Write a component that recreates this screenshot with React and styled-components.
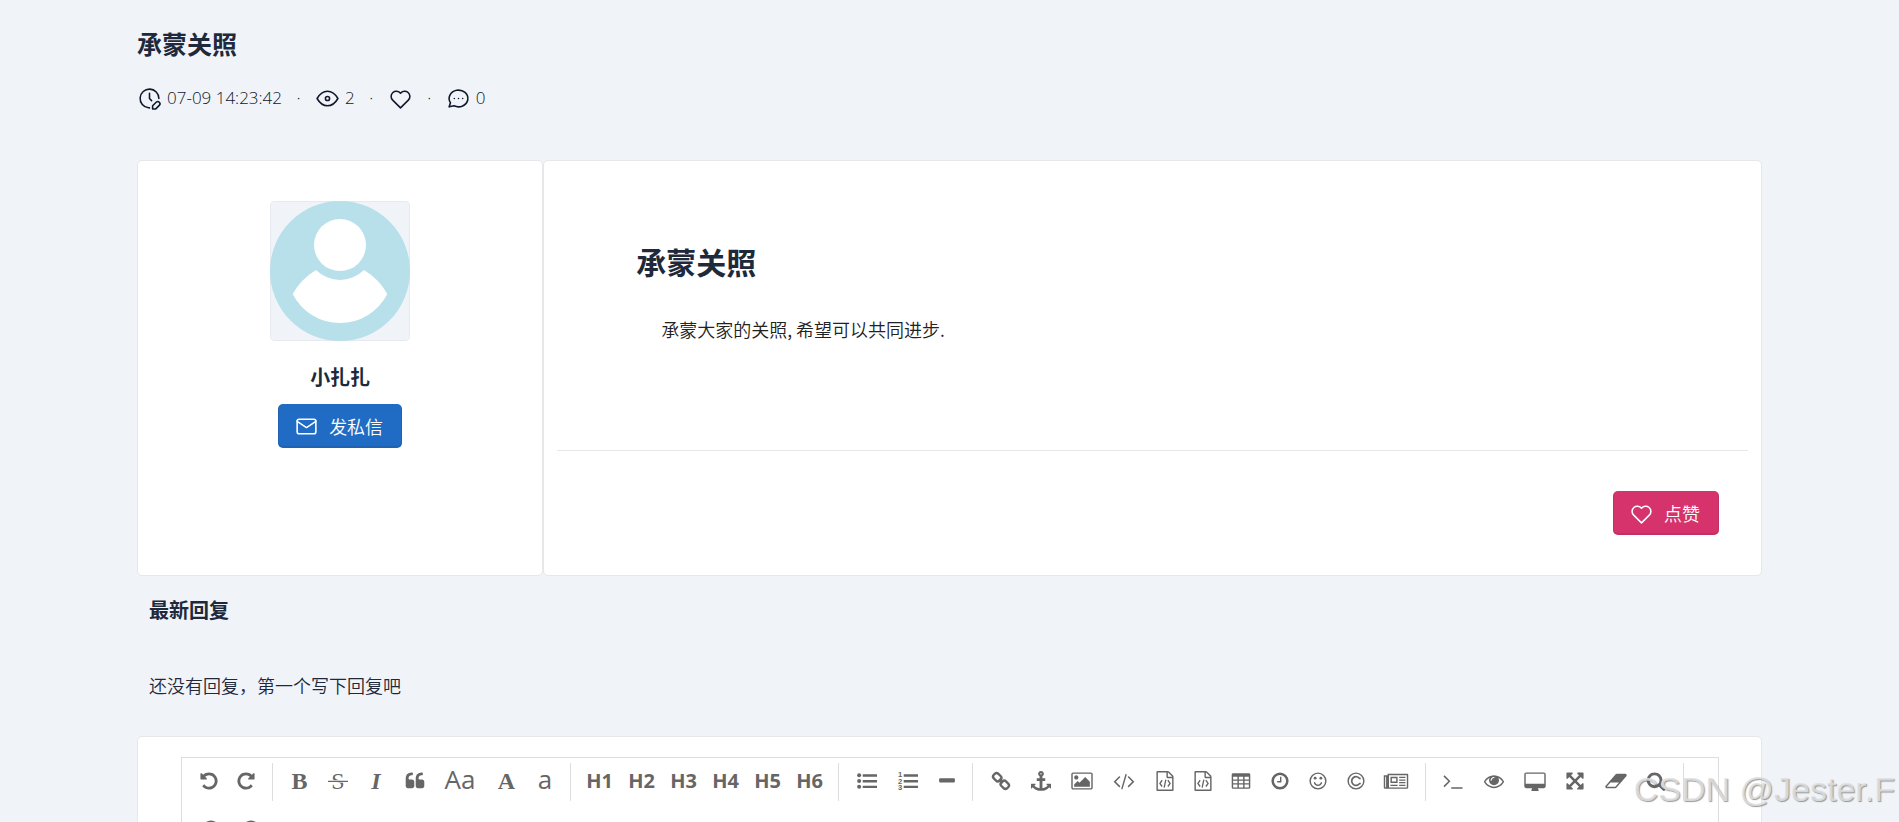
import React from "react";
// styles
import styled, { createGlobalStyle } from "styled-components";

const App = () => {
    return (
        <Page>
            <GlobalStyle />
            <Container>
                <PageHeader />
                <Columns>
                    <AuthorCard />
                    <ArticleCard />
                </Columns>
                <Replies />
                <Editor />
            </Container>
            <Watermark>CSDN @Jester.F</Watermark>
        </Page>
    );
};

const PageHeader = () => (
    <Header>
        <PageTitle>承蒙关照</PageTitle>
        <Meta>
            <MetaItem><LineIcon name="clock" />07-09 14:23:42</MetaItem>
            <Dot>·</Dot>
            <MetaItem><LineIcon name="eye" />2</MetaItem>
            <Dot>·</Dot>
            <MetaItem><LineIcon name="heart" /></MetaItem>
            <Dot>·</Dot>
            <MetaItem><LineIcon name="message" />0</MetaItem>
        </Meta>
    </Header>
);

const AuthorCard = () => (
    <Author>
        <Avatar>
            <svg viewBox="0 0 140 140">
                <circle cx="70" cy="70" r="70" fill="#b8e0ea" />
                <circle cx="70" cy="44" r="26" fill="#fff" />
                <path
                    fill="#fff"
                    d="M46 69A34 34 0 0 0 94 69Q109 78 117.3 93A53 53 0 0 1 22.7 93Q31 78 46 69Z"
                />
            </svg>
        </Avatar>
        <AuthorName>小扎扎</AuthorName>
        <Button type="button" $color="#206bc4">
            <LineIcon name="mail" />发私信
        </Button>
    </Author>
);

const ArticleCard = () => (
    <Article>
        <ArticleBody>
            <h1>承蒙关照</h1>
            <p>承蒙大家的关照, 希望可以共同进步.</p>
        </ArticleBody>
        <ArticleFooter>
            <Button type="button" $color="#d6336c">
                <LineIcon name="heart" />点赞
            </Button>
        </ArticleFooter>
    </Article>
);

const Replies = () => (
    <ReplySection>
        <h3>最新回复</h3>
        <p>还没有回复，第一个写下回复吧</p>
    </ReplySection>
);

const Editor = () => (
    <EditorCard>
        <EditorBox>
            <Toolbar>
                {tools.map((group, i) => (
                    <React.Fragment key={i}>
                        {group.map((tool, j) => (
                            <Tool key={j} type="button" aria-label={tool.label} $width={tool.width}>
                                {tool.text
                                    ? <Glyph $kind={tool.kind}>{tool.text}</Glyph>
                                    : <SolidIcon name={tool.icon} />}
                            </Tool>
                        ))}
                        {i < tools.length - 1 && <Divider />}
                    </React.Fragment>
                ))}
            </Toolbar>
        </EditorBox>
    </EditorCard>
);

// toolbar, one array for each group between the dividers
const tools = [
    [
        { label: "undo", icon: "undo", width: 37 },
        { label: "redo", icon: "redo", width: 36 },
    ],
    [
        { label: "bold", text: "B", kind: "serif", width: 37 },
        { label: "strikethrough", icon: "strike", width: 38 },
        { label: "italic", text: "I", kind: "italic", width: 36 },
        { label: "quote", icon: "quote", width: 39 },
        { label: "capitalize words", text: "Aa", kind: "sans", width: 50 },
        { label: "uppercase", text: "A", kind: "serif", width: 41 },
        { label: "lowercase", text: "a", kind: "sans", width: 34 },
    ],
    [1, 2, 3, 4, 5, 6].map((n) => ({ label: "heading " + n, text: "H" + n, kind: "heading", width: 41 })),
    [
        { label: "unordered list", icon: "ul", width: 40 },
        { label: "ordered list", icon: "ol", width: 40 },
        { label: "horizontal rule", icon: "minus", width: 35 },
    ],
    [
        { label: "link", icon: "link", width: 39 },
        { label: "anchor", icon: "anchor", width: 40 },
        { label: "image", icon: "image", width: 40 },
        { label: "code", icon: "code", width: 42 },
        { label: "code block", icon: "file", width: 37 },
        { label: "preformatted text", icon: "file", width: 37 },
        { label: "table", icon: "table", width: 38 },
        { label: "datetime", icon: "clock", width: 37 },
        { label: "emoji", icon: "smile", width: 37 },
        { label: "html entities", icon: "copyright", width: 37 },
        { label: "page break", icon: "news", width: 42 },
    ],
    [
        { label: "goto line", icon: "terminal", width: 38 },
        { label: "unwatch", icon: "eye", width: 41 },
        { label: "preview", icon: "desktop", width: 40 },
        { label: "fullscreen", icon: "expand", width: 38 },
        { label: "clear", icon: "eraser", width: 41 },
        { label: "search", icon: "search", width: 38 },
    ],
    [
        { label: "help", icon: "help", width: 41 },
        { label: "about", icon: "info", width: 37 },
    ],
];

// outline icons, 24 grid
const lineIcons = {
    clock: (
        <>
            <path d="M21 12a9 9 0 1 0-9.972 8.948c.32.034.644.052.972.052" />
            <path d="M12 7v5l2 2" />
            <path d="M18.42 15.61a2.1 2.1 0 0 1 2.97 2.97L18 22h-3v-3l3.42-3.39z" />
        </>
    ),
    eye: (
        <>
            <circle cx="12" cy="12" r="2" />
            <path d="M22 12c-2.667 4.667-6 7-10 7s-7.333-2.333-10-7c2.667-4.667 6-7 10-7s7.333 2.333 10 7" />
        </>
    ),
    heart: <path d="M19.5 13.572L12 21l-7.5-7.428m0 0A5 5 0 1 1 12 7.006a5 5 0 1 1 7.5 6.572" />,
    message: (
        <>
            <path d="M3 20l1.3-3.9a9 8 0 1 1 3.4 2.9L3 20" />
            <path d="M12 12v.01M8 12v.01M16 12v.01" />
        </>
    ),
    mail: (
        <>
            <rect x="3" y="5" width="18" height="14" rx="2" />
            <path d="M3 7l9 6l9-6" />
        </>
    ),
};

const LineIcon = ({ name }) => (
    <Outline viewBox="0 0 24 24" aria-hidden="true">{lineIcons[name]}</Outline>
);

const undoPath = "M1664 896q0 156-61 298t-164 245-245 164-298 61q-172 0-327-72.5t-264-204.5q-7-10-6.5-22.5t8.5-20.5l137-138q10-9 25-9 16 2 23 12 73 95 179 147t225 52q104 0 198.5-40.5t163.5-109.5 109.5-163.5 40.5-198.5-40.5-198.5-109.5-163.5-163.5-109.5-198.5-40.5q-98 0-188 35.5t-160 101.5l137 138q31 30 14 69-17 40-59 40h-448q-26 0-45-19t-19-45v-448q0-42 40-59 39-17 69 14l130 129q107-101 244.5-156.5t284.5-55.5q156 0 298 61t245 164 164 245 61 298z";
const quotePath = "v384q0 80-56 136t-136 56h-384q-80 0-136-56t-56-136v-704q0-104 40.5-198.5t109.5-163.5 163.5-109.5 198.5-40.5h64q26 0 45 19t19 45v128q0 26-19 45t-45 19h-64q-106 0-181 75t-75 181v32q0 40 28 68t68 28h224q80 0 136 56t56 136z";

// solid icons, 1792 grid
const solidIcons = {
    undo: <path d={undoPath} />,
    redo: <path transform="translate(1792 0) scale(-1 1)" d={undoPath} />,
    strike: (
        <>
            <text x="896" y="1640" fontSize="2150" fontFamily="Liberation Serif, serif" textAnchor="middle">S</text>
            <path stroke="#fff" strokeWidth="220" d="M0 930h1792" />
            <path stroke="currentColor" strokeWidth="110" d="M0 930h1792" />
        </>
    ),
    quote: <path d={"M832 960" + quotePath + "M1728 960" + quotePath} />,
    ul: (
        <>
            <circle cx="192" cy="384" r="180" />
            <circle cx="192" cy="896" r="180" />
            <circle cx="192" cy="1408" r="180" />
            <path d="M512 288h1280v220H512zM512 800h1280v220H512zM512 1312h1280v220H512z" />
        </>
    ),
    ol: (
        <>
            <g fontSize="680" fontWeight="700" fontFamily="Liberation Sans, sans-serif">
                <text x="0" y="520">1</text>
                <text x="0" y="1120">2</text>
                <text x="0" y="1740">3</text>
            </g>
            <path d="M512 288h1280v220H512zM512 800h1280v220H512zM512 1312h1280v220H512z" />
        </>
    ),
    minus: <rect x="192" y="660" width="1408" height="360" rx="90" />,
    link: (
        <g transform="translate(896 896) rotate(45)" fill="none" stroke="currentColor" strokeWidth="210">
            <rect x="-850" y="-290" width="740" height="580" rx="230" />
            <rect x="110" y="-290" width="740" height="580" rx="230" />
            <path d="M-240 0h480" />
        </g>
    ),
    anchor: <path d="M960 256q0-26-19-45t-45-19-45 19-19 45 19 45 45 19 45-19 19-45zm832 928v352q0 22-20 30-8 2-12 2-12 0-23-9l-93-93q-119 143-318.5 226.5t-429.5 83.5-429.5-83.5-318.5-226.5l-93 93q-9 9-23 9-4 0-12-2-20-8-20-30v-352q0-14 9-23t23-9h352q22 0 30 20 8 19-7 35l-100 100q67 91 189.5 153.5t271.5 82.5v-647h-192q-26 0-45-19t-19-45v-128q0-26 19-45t45-19h192v-163q-58-34-93-92.5t-35-128.5q0-106 75-181t181-75 181 75 75 181q0 70-35 128.5t-93 92.5v163h192q26 0 45 19t19 45v128q0 26-19 45t-45 19h-192v647q149-20 271.5-82.5t189.5-153.5l-100-100q-15-16-7-35 8-20 30-20h352q14 0 23 9t9 23z" />,
    image: <path d="M576 576q0 80-56 136t-136 56-136-56-56-136 56-136 136-56 136 56 56 136zm1024 384v448h-1408v-192l320-320 160 160 512-512zm96-704h-1600q-13 0-22.5 9.5t-9.5 22.5v1216q0 13 9.5 22.5t22.5 9.5h1600q13 0 22.5-9.5t9.5-22.5v-1216q0-13-9.5-22.5t-22.5-9.5zm160 32v1216q0 66-47 113t-113 47h-1600q-66 0-113-47t-47-113v-1216q0-66 47-113t113-47h1600q66 0 113 47t47 113z" />,
    code: <path d="M553 1399l-50 50q-10 10-23 10t-23-10l-466-466q-10-10-10-23t10-23l466-466q10-10 23-10t23 10l50 50q10 10 10 23t-10 23l-393 393 393 393q10 10 10 23t-10 23zm591-1067l-373 1291q-4 13-15.5 19.5t-23.5 2.5l-62-17q-13-4-19.5-15.5t-2.5-24.5l373-1291q4-13 15.5-19.5t23.5-2.5l62 17q13 4 19.5 15.5t2.5 24.5zm657 651l-466 466q-10 10-23 10t-23-10l-50-50q-10-10-10-23t10-23l393-393-393-393q-10-10-10-23t10-23l50-50q10-10 23-10t23 10l466 466q10 10 10 23t-10 23z" />,
    file: (
        <>
            <path d="M1596 380q28 28 48 76t20 88v1152q0 40-28 68t-68 28h-1344q-40 0-68-28t-28-68v-1600q0-40 28-68t68-28h896q40 0 88 20t76 48zm-444-244v376h376q-10-29-22-41l-313-313q-12-12-41-22zm384 1528v-1024h-416q-40 0-68-28t-28-68v-416h-768v1536h1280z" />
            <path fill="none" stroke="currentColor" strokeWidth="120" d="M640 830l-200 280 200 280M1152 830l200 280-200 280M970 780l-150 700" />
        </>
    ),
    table: <path fillRule="evenodd" d="M192 192h1408q128 0 128 128v1152q0 128-128 128H192q-128 0-128-128V320q0-128 128-128zM192 512v244h384V512zM704 512v244h384V512zM1216 512v244h384V512zM192 870v230h384V870zM704 870v230h384V870zM1216 870v230h384V870zM192 1220v252h384v-252zM704 1220v252h384v-252zM1216 1220v252h384v-252z" />,
    clock: (
        <>
            <circle cx="896" cy="896" r="656" fill="none" stroke="currentColor" strokeWidth="224" />
            <path d="M1024 544v448q0 14-9 23t-23 9h-320q-14 0-23-9t-9-23v-64q0-14 9-23t23-9h224v-352q0-14 9-23t23-9h64q14 0 23 9t9 23z" />
        </>
    ),
    smile: (
        <>
            <circle cx="896" cy="896" r="704" fill="none" stroke="currentColor" strokeWidth="128" />
            <circle cx="640" cy="640" r="128" />
            <circle cx="1152" cy="640" r="128" />
            <path d="M1262 1075q-37 121-138 195t-228 74-228-74-138-195q-8-25 4-48.5t38-31.5q25-8 48.5 4t31.5 38q25 80 92.5 129.5t151.5 49.5 151.5-49.5 92.5-129.5q8-26 32-38t49-4 37 31.5 4 48.5z" />
        </>
    ),
    copyright: (
        <g fill="none" stroke="currentColor">
            <circle cx="896" cy="896" r="704" strokeWidth="128" />
            <path strokeWidth="150" d="M1250 740V600M1230 690A390 390 0 1 0 1230 1110M1250 1180V1050" />
        </g>
    ),
    news: (
        <>
            <path fillRule="evenodd" d="M140 256H1930q62 0 62 62V1474q0 126-126 126H-70q-130 0-130-130V384H140zM270 384V1474H1866V384zM0 512H-72V1440q0 40 40 40t40-40V512z" />
            <path fillRule="evenodd" d="M400 512h640v560H400zM528 640v304h384V640zM1180 512h560v120h-560zM1180 760h560v120h-560zM1180 980h560v120h-560zM400 1230h640v120H400zM1180 1230h560v120h-560z" />
        </>
    ),
    terminal: (
        <path fill="none" stroke="currentColor" strokeWidth="140" d="M90 440l480 480L90 1400M740 1530h1010" />
    ),
    eye: <path d="M1664 960q-152-236-381-353 61 104 61 225 0 185-131.5 316.5t-316.5 131.5-316.5-131.5-131.5-316.5q0-121 61-225-229 117-381 353 133 205 333.5 326.5t434.5 121.5 434.5-121.5 333.5-326.5zm-720-384q0-20-14-34t-34-14q-125 0-214.5 89.5t-89.5 214.5q0 20 14 34t34 14 34-14 14-34q0-86 61-147t147-61q20 0 34-14t14-34zm848 384q0 34-20 69-140 230-376.5 368.5t-499.5 138.5-499.5-139-376.5-368q-20-35-20-69t20-69q140-229 376.5-368t499.5-139 499.5 139 376.5 368q20 35 20 69z" />,
    desktop: <path fillRule="evenodd" d="M96 128h1600q160 0 160 160v1088q0 160-160 160h-544q0 60 64 128v128H576v-128q64-68 64-128H96q-160 0-160-160V288q0-160 160-160zM64 256v896h1664V256z" />,
    expand: <path d="M1411 541l-355 355 355 355 144-144q29-31 70-14 39 17 39 59v448q0 26-19 45t-45 19h-448q-42 0-59-40-17-39 14-69l144-144-355-355-355 355 144 144q31 30 14 69-17 40-59 40h-448q-26 0-45-19t-19-45v-448q0-42 40-59 39-17 69 14l144 144 355-355-355-355-144 144q-19 19-45 19-12 0-24-5-40-17-40-59v-448q0-26 19-45t45-19h448q42 0 59 40 17 39-14 69l-144 144 355 355 355-355-144-144q-31-30-14-69 17-40 59-40h448q26 0 45 19t19 45v448q0 42-39 59-13 5-25 5-26 0-45-19z" />,
    eraser: <path d="M832 1408l336-384h-768l-336 384h768zm1013-1077q15 34 9.5 71.5t-30.5 65.5l-896 1024q-38 44-96 44h-768q-38 0-69.5-20.5t-47.5-54.5q-15-34-9.5-71.5t30.5-65.5l896-1024q38-44 96-44h768q38 0 69.5 20.5t47.5 54.5z" />,
    search: <path d="M1216 832q0-185-131.5-316.5t-316.5-131.5-316.5 131.5-131.5 316.5 131.5 316.5 316.5 131.5 316.5-131.5 131.5-316.5zm512 832q0 52-38 90t-90 38q-54 0-90-38l-343-342q-179 124-399 124-143 0-273.5-55.5t-225-150-150-225-55.5-273.5 55.5-273.5 150-225 225-150 273.5-55.5 273.5 55.5 225 150 150 225 55.5 273.5q0 220-124 399l343 343q37 37 37 90z" />,
    help: (
        <>
            <circle cx="896" cy="896" r="768" />
            <path fill="none" stroke="#fff" strokeWidth="190" d="M600 680q60-200 296-200t250 200q0 120-130 200t-120 200M896 1200v190" />
        </>
    ),
    info: (
        <>
            <circle cx="896" cy="896" r="768" />
            <path fill="none" stroke="#fff" strokeWidth="200" d="M896 380v200M740 800h156v500M700 1320h400" />
        </>
    ),
};

const SolidIcon = ({ name }) => (
    <Solid viewBox="0 0 1792 1792" aria-hidden="true">{solidIcons[name]}</Solid>
);

// styled components
const GlobalStyle = createGlobalStyle`
    * {
        box-sizing: border-box;
        margin: 0;
    }

    body {
        background: #f0f4f9;
        color: #1e293b;
        font-family: "Noto Sans CJK SC", sans-serif;
        font-size: 18px;
        font-weight: 350;
        line-height: 26px;
    }

    button {
        font: inherit;
        cursor: pointer;
    }
`;

const Page = styled.div`
    position: relative;
    height: 100vh;
    overflow: hidden;
`;

const Container = styled.main`
    max-width: 1649px;
    margin: 0 auto;
    padding: 0 12px;
`;

const Header = styled.header`
    padding: 26px 0 49px;
`;

const PageTitle = styled.h2`
    font-size: 25px;
    font-weight: 700;
    line-height: 34px;
`;

const Meta = styled.div`
    display: flex;
    align-items: center;
    height: 26px;
    margin-top: 25px;
    color: #0f172a;
    font-family: "Open Sans", sans-serif;
    font-size: 17px;
    font-weight: 300;
`;

const MetaItem = styled.span`
    display: flex;
    align-items: center;
    gap: 5px;
`;

const Dot = styled.span`
    width: 33px;
    text-align: center;
`;

const Outline = styled.svg`
    flex: none;
    width: 25px;
    height: 25px;
    fill: none;
    stroke: currentColor;
    stroke-width: 1.5;
    stroke-linecap: round;
    stroke-linejoin: round;
`;

const Card = styled.section`
    background: #fff;
    border: 1px solid #e6e7e9;
    border-radius: 5px;
`;

const Columns = styled.div`
    display: grid;
    grid-template-columns: 1fr 3fr;
    min-height: 416px;
`;

const Author = styled(Card)`
    display: flex;
    flex-direction: column;
    align-items: center;
    padding: 40px;
`;

const Avatar = styled.div`
    width: 140px;
    height: 140px;
    background: #f0f4f9;
    border-radius: 5px;
    box-shadow: inset 0 0 0 1px #e6e9ee;

    svg {
        display: block;
    }
`;

const AuthorName = styled.h3`
    margin: 22px 0 14px;
    font-size: 20px;
    font-weight: 700;
    line-height: 27px;
`;

const Button = styled.button`
    display: flex;
    align-items: center;
    gap: 10px;
    height: 44px;
    padding: 0 19px 0 16px;
    color: #fff;
    background: ${(props) => props.$color};
    border: 0;
    border-radius: 5px;
    box-shadow: inset 0 -1px 0 1px rgba(30, 41, 59, 0.12);
`;

const Article = styled(Card)`
    display: flex;
    flex-direction: column;
    padding: 0 13px;
`;

const ArticleBody = styled.div`
    flex: 1;
    padding: 79px 79px 0;

    h1 {
        font-size: 30px;
        font-weight: 700;
        line-height: 42px;
    }

    p {
        margin-top: 34px;
        padding-left: 25px;
        color: #222;
    }
`;

const ArticleFooter = styled.div`
    display: flex;
    justify-content: flex-end;
    padding: 40px 29px;
    border-top: 1px solid #e6e7e9;
`;

const ReplySection = styled.section`
    padding: 20px 12px 38px;

    h3 {
        font-size: 20px;
        font-weight: 700;
        line-height: 28px;
    }

    p {
        margin-top: 48px;
    }
`;

const EditorCard = styled(Card)`
    padding: 20px 42px 20px 43px;
`;

const EditorBox = styled.div`
    min-height: 600px;
    border: 1px solid #ddd;
`;

const Toolbar = styled.div`
    display: flex;
    flex-wrap: wrap;
    gap: 10px 1px;
    padding: 5px 8px;
`;

const Tool = styled.button`
    display: flex;
    align-items: center;
    justify-content: center;
    width: ${(props) => props.$width}px;
    height: 38px;
    padding: 0 0 3px;
    color: #666;
    background: none;
    border: 0;
`;

const glyphStyles = {
    serif: "font: 700 24px/34px 'Liberation Serif', serif;",
    italic: "font: italic 700 24px/34px 'Liberation Serif', serif;",
    sans: "font: 400 26px/30px 'Open Sans', sans-serif; padding-bottom: 4px;",
    heading: "font: 700 20px/34px 'Open Sans', sans-serif;",
};

const Glyph = styled.span`
    ${(props) => glyphStyles[props.$kind]}
`;

const Solid = styled.svg`
    width: 20px;
    height: 20px;
    overflow: visible;
    fill: currentColor;
`;

const Divider = styled.span`
    width: 1px;
    height: 38px;
    margin: 0 7px;
    background: #ddd;
`;

// sits over the page in the bottom corner
const Watermark = styled.div`
    position: absolute;
    right: 4px;
    bottom: 13px;
    color: rgba(225, 225, 225, 0.85);
    font: 400 34px/40px "Liberation Sans", sans-serif;
    text-shadow: 1px 1px 1px rgba(90, 90, 90, 0.6);
`;

export default App;
